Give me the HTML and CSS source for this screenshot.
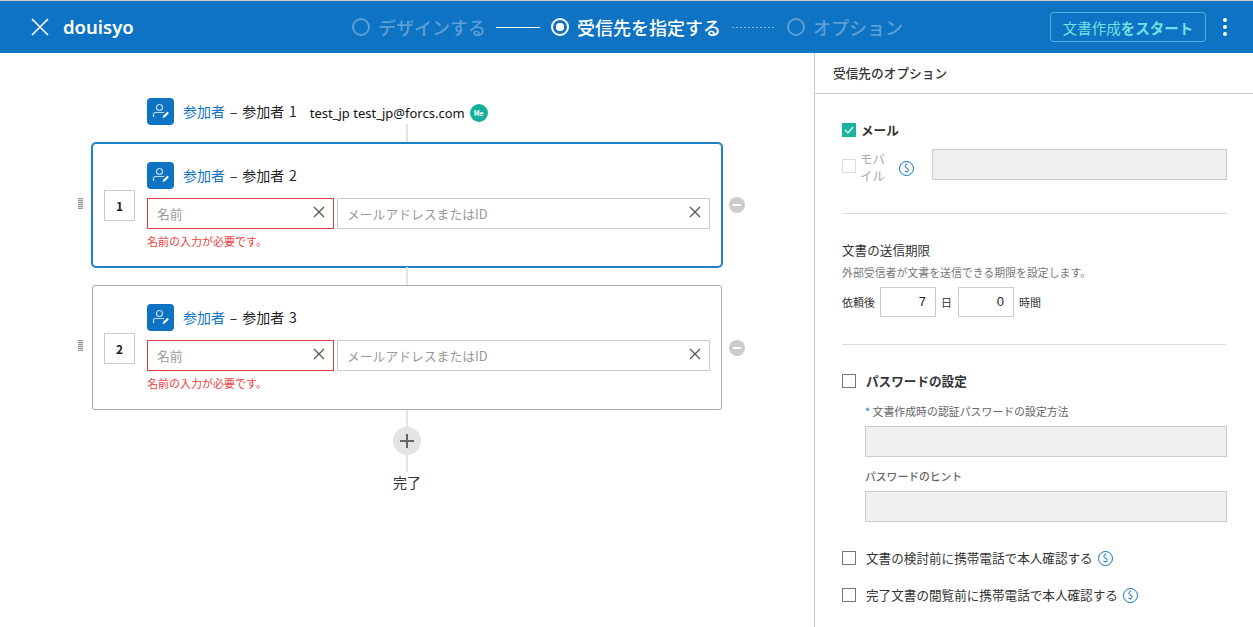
FILE: index.html
```html
<!DOCTYPE html>
<html lang="ja">
<head>
  <meta charset="utf-8">
  <title>douisyo</title>
  <link rel="stylesheet" href="styles.css">
</head>
<body>

  <header class="topbar">
    <div class="doc-title">
      <svg class="close-icon" viewBox="0 0 20 20" width="20" height="20"><path d="M2 2L18 18M18 2L2 18" stroke="#fff" stroke-width="1.6" fill="none"/></svg>
      <span class="doc-name">douisyo</span>
    </div>
    <div class="steps">
      <span class="step-dot"></span>
      <span class="step-text">デザインする</span>
      <span class="step-line"></span>
      <span class="step-dot step-dot-on"></span>
      <span class="step-text step-text-on">受信先を指定する</span>
      <span class="step-line step-line-dash"></span>
      <span class="step-dot"></span>
      <span class="step-text">オプション</span>
    </div>
    <button class="start-btn">文書作成<b>をスタート</b></button>
    <div class="kebab"><i></i><i></i><i></i></div>
  </header>

  <div class="main">
    <section class="canvas">
      <div class="flow">
        <div class="owner">
          <svg class="role-icon" viewBox="0 0 27 27" width="27" height="27"><rect width="27" height="27" rx="4" fill="#0f73c3"/><circle cx="12.500" cy="9.500" r="3" fill="none" stroke="#bfdcf2" stroke-width="1.200"/><path d="M6.500 19v-2.500q0-2 2-2h8.500" fill="none" stroke="#bfdcf2" stroke-width="1.200"/><path d="M15.500 20l.8-2.300 4-4 1.600 1.600-4 4z" fill="#fff"/></svg>
          <span class="role-name"><em>参加者</em> – 参加者 1</span>
          <span class="owner-mail">test_jp test_jp@forcs.com</span>
          <span class="me-badge">Me</span>
        </div>
        <div class="link link-a"></div>

        <div class="grip"></div>
        <div class="card card-active">
          <div class="order">1</div>
          <div class="card-body">
            <div class="card-head">
              <svg class="role-icon" viewBox="0 0 27 27" width="27" height="27"><rect width="27" height="27" rx="4" fill="#0f73c3"/><circle cx="12.500" cy="9.500" r="3" fill="none" stroke="#bfdcf2" stroke-width="1.200"/><path d="M6.500 19v-2.500q0-2 2-2h8.500" fill="none" stroke="#bfdcf2" stroke-width="1.200"/><path d="M15.500 20l.8-2.300 4-4 1.600 1.600-4 4z" fill="#fff"/></svg>
              <span class="role-name"><em>参加者</em> – 参加者 2</span>
            </div>
            <div class="fields">
              <div class="field field-name field-error"><span>名前</span><svg viewBox="0 0 12 12" width="12" height="12"><path d="M1 1L11 11M11 1L1 11" stroke="#555" stroke-width="1.300"/></svg></div>
              <div class="field field-mail"><span>メールアドレスまたはID</span><svg viewBox="0 0 12 12" width="12" height="12"><path d="M1 1L11 11M11 1L1 11" stroke="#555" stroke-width="1.300"/></svg></div>
            </div>
            <p class="error-msg">名前の入力が必要です。</p>
          </div>
        </div>
        <div class="minus"></div>

        <div class="link link-b"></div>

        <div class="grip"></div>
        <div class="card">
          <div class="order">2</div>
          <div class="card-body">
            <div class="card-head">
              <svg class="role-icon" viewBox="0 0 27 27" width="27" height="27"><rect width="27" height="27" rx="4" fill="#0f73c3"/><circle cx="12.500" cy="9.500" r="3" fill="none" stroke="#bfdcf2" stroke-width="1.200"/><path d="M6.500 19v-2.500q0-2 2-2h8.500" fill="none" stroke="#bfdcf2" stroke-width="1.200"/><path d="M15.500 20l.8-2.300 4-4 1.600 1.600-4 4z" fill="#fff"/></svg>
              <span class="role-name"><em>参加者</em> – 参加者 3</span>
            </div>
            <div class="fields">
              <div class="field field-name field-error"><span>名前</span><svg viewBox="0 0 12 12" width="12" height="12"><path d="M1 1L11 11M11 1L1 11" stroke="#555" stroke-width="1.300"/></svg></div>
              <div class="field field-mail"><span>メールアドレスまたはID</span><svg viewBox="0 0 12 12" width="12" height="12"><path d="M1 1L11 11M11 1L1 11" stroke="#555" stroke-width="1.300"/></svg></div>
            </div>
            <p class="error-msg">名前の入力が必要です。</p>
          </div>
        </div>
        <div class="minus"></div>

        <div class="link link-c"></div>
        <div class="add-btn">
          <svg viewBox="0 0 14 14" width="14" height="14"><path d="M7 0V14M0 7H14" stroke="#666" stroke-width="2"/></svg>
        </div>
        <div class="link link-c"></div>
        <div class="done">完了</div>
      </div>
    </section>

    <aside class="options">
      <h3 class="options-title">受信先のオプション</h3>
      <div class="options-body">

        <div class="opt-group">
          <div class="check-row">
            <span class="check check-on"><svg viewBox="0 0 14 14" width="14" height="14"><path d="M3 7l3 3 5-6" fill="none" stroke="#d8f3ef" stroke-width="1.500"/></svg></span>
            <span class="mail-label">メール</span>
          </div>
          <div class="mobile-row">
            <span class="check check-off"></span>
            <span class="mobile-label">モバイル</span>
            <span class="paid">$</span>
            <div class="box box-mobile"></div>
          </div>
        </div>

        <div class="opt-group opt-limit">
          <h4 class="limit-title">文書の送信期限</h4>
          <p class="limit-desc">外部受信者が文書を送信できる期限を設定します。</p>
          <div class="limit-row">
            <span>依頼後</span>
            <div class="num">7</div>
            <span class="unit-day">日</span>
            <div class="num">0</div>
            <span>時間</span>
          </div>
        </div>

        <div class="opt-pass">
          <div class="check-row">
            <span class="check"></span>
            <span class="check-label check-label-bold">パスワードの設定</span>
          </div>
          <div class="pass-fields">
            <label class="pass-label"><span class="star">*</span> 文書作成時の認証パスワードの設定方法</label>
            <div class="box"></div>
            <label class="pass-label pass-label-2">パスワードのヒント</label>
            <div class="box"></div>
          </div>
        </div>

        <div class="check-row verify-row">
          <span class="check"></span>
          <span class="check-label">文書の検討前に携帯電話で本人確認する</span>
          <span class="paid">$</span>
        </div>
        <div class="check-row verify-row">
          <span class="check"></span>
          <span class="check-label">完了文書の閲覧前に携帯電話で本人確認する</span>
          <span class="paid">$</span>
        </div>

      </div>
    </aside>
  </div>

</body>
</html>
```

FILE: styles.css
```css
* {
  box-sizing: border-box;
}
html, body {
  height: 100%;
}
body {
  margin: 0;
  font-family: "Noto Sans CJK JP", "Noto Sans", sans-serif;
  color: #333;
  background: #fff;
  display: flex;
  flex-direction: column;
  overflow: hidden;
}

/* top bar */
.topbar {
  height: 53px;
  flex: none;
  display: flex;
  align-items: center;
  background: #0f73c3;
  border-top: 1px solid #ccc;
  color: #fff;
}
.doc-title {
  width: 352px;
  padding-left: 30px;
  display: flex;
  align-items: center;
  gap: 13px;
}
.doc-name {
  font-family: "Noto Sans", sans-serif;
  font-size: 18.500px;
  font-weight: 600;
  line-height: 26px;
}
.steps {
  display: flex;
  align-items: center;
  font-size: 18px;
  line-height: 24px;
}
.step-dot {
  width: 18px;
  height: 18px;
  border: 2px solid #5c9fd6;
  border-radius: 50%;
  margin-right: 8px;
}
.step-dot-on {
  border-color: #fff;
  background: radial-gradient(circle, #fff 0 4px, transparent 4.500px);
}
.step-text {
  color: #5c9fd6;
  font-weight: 500;
}
.step-text-on {
  color: #fff;
}
.step-line {
  width: 44px;
  height: 1px;
  margin: 0 11px 0 10px;
  background: #fff;
}
.step-line-dash {
  width: 44px;
  margin: 0 11px;
  background: repeating-linear-gradient(90deg, #8dbce2 0 2px, transparent 2px 4px);
}
.start-btn {
  margin-left: auto;
  width: 156px;
  height: 30px;
  padding: 0;
  border: 1px solid #4fb0d8;
  border-radius: 3px;
  background: transparent;
  color: #72e0e0;
  font-family: inherit;
  font-size: 14.500px;
}
.start-btn b {
  font-weight: 700;
}
.kebab {
  width: 38px;
  margin-right: 9px;
  display: flex;
  flex-direction: column;
  align-items: center;
  gap: 3px;
}
.kebab i {
  width: 4px;
  height: 4px;
  border-radius: 50%;
  background: #fff;
}

/* left side */
.main {
  flex: 1;
  display: flex;
  min-height: 0;
}
.canvas {
  width: 814px;
  flex: none;
  padding: 45px 0 0 78px;
}
.flow {
  display: grid;
  grid-template-columns: 14px 630px 30px;
  align-items: center;
}
.owner {
  grid-column: 2;
  padding-left: 55px;
  height: 26px;
  display: flex;
  align-items: center;
}
.role-icon {
  flex: none;
}
.role-name {
  margin-left: 9px;
  font-size: 14px;
  font-weight: 400;
  line-height: 20px;
  word-spacing: 1.700px;
  white-space: nowrap;
  color: #222;
}
.card-head .role-name {
  margin-top: -2px;
}
.role-name em {
  font-style: normal;
  color: #0f73c3;
}
.owner-mail {
  margin: 3px 0 0 13px;
  font-family: "Noto Sans", sans-serif;
  font-size: 13px;
  color: #111;
}
.me-badge {
  margin: 3px 0 0 5px;
  width: 18px;
  height: 18px;
  border-radius: 50%;
  background: #14b09c;
  color: #fff;
  font-size: 7px;
  font-weight: 700;
  line-height: 18px;
  text-align: center;
}
.link {
  grid-column: 2;
  justify-self: center;
  width: 2px;
  background: #e4e4e4;
}
.link-a {
  height: 19px;
}
.link-b {
  height: 18px;
}
.link-c {
  height: 17px;
}
.grip {
  grid-column: 1;
  height: 11px;
  width: 5px;
  margin-top: -4px;
  background: repeating-linear-gradient(0deg, #999 0 1px, #ddd 1px 2px);
}
.card {
  grid-column: 2;
  height: 125px;
  padding: 18px 11px 0 11px;
  display: flex;
  gap: 12px;
  align-items: center;
  border: 1px solid #aaa;
  border-radius: 3px;
  background: #fff;
}
.card-active {
  height: 124px;
  border-color: #1e7fc9;
  box-shadow: 0 0 0 1px #1e7fc9;
  border-radius: 4px;
}
.order {
  width: 31px;
  height: 31px;
  flex: none;
  margin-top: -17px;
  border: 1px solid #ccc;
  font-size: 12px;
  font-weight: 700;
  line-height: 29px;
  text-align: center;
  color: #222;
}
.card-body {
  flex: 1;
  align-self: flex-start;
}
.card-head {
  display: flex;
  align-items: center;
  height: 27px;
}
.fields {
  display: flex;
  gap: 3px;
  margin-top: 9px;
}
.field {
  height: 31px;
  padding: 0 8px 0 9px;
  display: flex;
  align-items: center;
  justify-content: space-between;
  border: 1px solid #ccc;
  color: #999;
  font-size: 12.800px;
}
.field svg {
  margin-top: -3px;
}
.field-name {
  width: 187px;
}
.field-mail {
  flex: 1;
}
.field-error {
  border-color: #e03c3c;
}
.error-msg {
  margin: 4px 0 0;
  color: #f04040;
  font-size: 11px;
  line-height: 16px;
}
.minus {
  grid-column: 3;
  width: 16px;
  height: 16px;
  margin-left: 7px;
  border-radius: 50%;
  background: linear-gradient(#fff, #fff) center / 8px 2px no-repeat, #ccc;
}
.add-btn {
  grid-column: 2;
  justify-self: center;
  width: 28px;
  height: 28px;
  border-radius: 50%;
  background: #e4e4e4;
  display: flex;
  align-items: center;
  justify-content: center;
}
.done {
  grid-column: 2;
  justify-self: center;
  font-size: 14px;
  line-height: 20px;
}

/* right side */
.options {
  flex: 1;
  border-left: 1px solid #ccc;
}
.options-title {
  margin: 0;
  height: 41px;
  padding-left: 18px;
  border-bottom: 1px solid #ccc;
  font-size: 12.700px;
  font-weight: 500;
  line-height: 40px;
}
.options-body {
  padding: 27px 26px 0 27px;
}
.check-row {
  display: flex;
  align-items: center;
}
.check {
  width: 14px;
  height: 14px;
  flex: none;
  border: 1px solid #777;
  display: block;
}
.check svg {
  display: block;
  margin: -1px;
}
.check-on {
  border-color: #1ab3a0;
  background: #1ab3a0;
}
.check-off {
  margin-top: 11px;
  border-color: #ddd;
}
.mail-label {
  margin-left: 5px;
  font-size: 12.600px;
  font-weight: 700;
  line-height: 18px;
}
.mobile-row {
  display: flex;
  align-items: flex-start;
  margin-top: 9px;
}
.mobile-label {
  width: 26px;
  margin: 2px 0 0 4px;
  color: #aaa;
  font-size: 12.500px;
  line-height: 17px;
}
.paid {
  width: 15px;
  height: 15px;
  flex: none;
  border: 1.300px solid #0f73c3;
  border-radius: 50%;
  color: #0f73c3;
  font-size: 10px;
  line-height: 12px;
  text-align: center;
}
.mobile-row .paid {
  margin: 13px 0 0 13px;
}
.box {
  height: 31px;
  border: 1px solid #ccc;
  background: #f0f0f0;
}
.box-mobile {
  flex: 1;
  margin: 1px 0 0 18px;
}
.opt-group {
  padding-bottom: 29px;
  border-bottom: 1px solid #ddd;
}
.opt-limit {
  padding: 26px 0 27px;
}
.limit-title {
  margin: 0;
  font-size: 12.600px;
  font-weight: 400;
  line-height: 20px;
}
.limit-desc {
  margin: 4px 0 7px;
  color: #777;
  font-size: 10.900px;
  line-height: 16px;
}
.limit-row {
  display: flex;
  align-items: center;
  gap: 5px;
  font-size: 11px;
}
.unit-day {
  margin-right: 1px;
}
.num {
  width: 56px;
  height: 30px;
  padding-right: 9px;
  border: 1px solid #ccc;
  font-family: "Liberation Sans", sans-serif;
  font-size: 13px;
  line-height: 28px;
  text-align: right;
  color: #222;
}
.opt-pass {
  padding-top: 27px;
}
.check-label {
  margin-left: 10px;
  font-size: 12.600px;
  line-height: 18px;
}
.check-label-bold {
  font-weight: 700;
}
.pass-fields {
  padding: 13px 0 0 23px;
}
.pass-label {
  display: block;
  margin-bottom: 7px;
  color: #666;
  font-size: 10.900px;
  line-height: 16px;
}
.pass-label-2 {
  font-size: 10.800px;
  font-weight: 500;
  margin-top: 11px;
}
.star {
  color: #0f73c3;
}
.verify-row {
  margin-top: 19px;
}
.opt-pass + .verify-row {
  margin-top: 27px;
}
.verify-row .paid {
  margin-left: 5px;
}
```
